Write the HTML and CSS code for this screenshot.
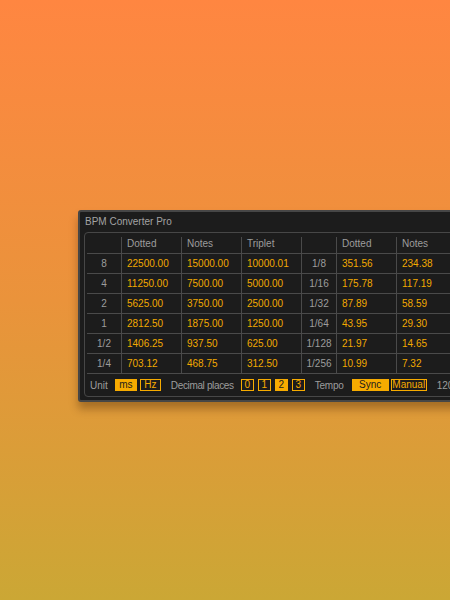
FILE: index.html
```html
<!DOCTYPE html>
<html>
<head>
<meta charset="utf-8">
<link rel="stylesheet" href="styles.css">
</head>
<body>
<div class="stage">
  <div class="window">
    <div class="title">BPM Converter Pro</div>
    <div class="panel">
      <div class="grid">
        <div class="cell head lab"></div>
        <div class="cell head">Dotted</div>
        <div class="cell head">Notes</div>
        <div class="cell head">Triplet</div>
        <div class="cell head lab2"></div>
        <div class="cell head">Dotted</div>
        <div class="cell head">Notes</div>
        <div class="cell head">Triplet</div>

        <div class="cell lab">8</div><div class="cell val">22500.00</div><div class="cell val">15000.00</div><div class="cell val">10000.01</div><div class="cell lab2">1/8</div><div class="cell val">351.56</div><div class="cell val">234.38</div><div class="cell val">156.25</div>
        <div class="cell lab">4</div><div class="cell val">11250.00</div><div class="cell val">7500.00</div><div class="cell val">5000.00</div><div class="cell lab2">1/16</div><div class="cell val">175.78</div><div class="cell val">117.19</div><div class="cell val">78.13</div>
        <div class="cell lab">2</div><div class="cell val">5625.00</div><div class="cell val">3750.00</div><div class="cell val">2500.00</div><div class="cell lab2">1/32</div><div class="cell val">87.89</div><div class="cell val">58.59</div><div class="cell val">39.06</div>
        <div class="cell lab">1</div><div class="cell val">2812.50</div><div class="cell val">1875.00</div><div class="cell val">1250.00</div><div class="cell lab2">1/64</div><div class="cell val">43.95</div><div class="cell val">29.30</div><div class="cell val">19.53</div>
        <div class="cell lab">1/2</div><div class="cell val">1406.25</div><div class="cell val">937.50</div><div class="cell val">625.00</div><div class="cell lab2">1/128</div><div class="cell val">21.97</div><div class="cell val">14.65</div><div class="cell val">9.77</div>
        <div class="cell lab">1/4</div><div class="cell val">703.12</div><div class="cell val">468.75</div><div class="cell val">312.50</div><div class="cell lab2">1/256</div><div class="cell val">10.99</div><div class="cell val">7.32</div><div class="cell val">4.88</div>
      </div>
      <div class="footer">
        <span class="flabel">Unit</span>
        <span class="btn on w-ms">ms</span>
        <span class="btn w-hz">Hz</span>
        <span class="flabel gap-l">Decimal places</span>
        <span class="btn sq first">0</span>
        <span class="btn sq">1</span>
        <span class="btn sq on">2</span>
        <span class="btn sq">3</span>
        <span class="flabel gap-t">Tempo</span>
        <span class="btn on w-sync">Sync</span>
        <span class="btn w-man">Manual</span>
        <span class="flabel gap-n">120.00</span>
      </div>
    </div>
  </div>
</div>
</body>
</html>
```

FILE: styles.css
```css
html, body {
  margin: 0;
  padding: 0;
  width: 450px;
  height: 600px;
  overflow: hidden;
}
body {
  font-family: "Liberation Sans", Arial, sans-serif;
  font-size: 10px;
  background: linear-gradient(180deg, #ff8641 0%, #ea933b 50%, #cba735 100%);
}
.stage {
  padding-top: 210px;
  padding-left: 78px;
  height: 600px;
  box-sizing: border-box;
}
.window {
  width: 440px;
  background: #1c1c1c;
  border: 2px solid #464646;
  border-radius: 3px;
  padding: 0 4px 3px 4px;
  box-shadow: 0 7px 9px rgba(60, 30, 0, 0.35);
}
.title {
  color: #a3a3a3;
  height: 20px;
  line-height: 20px;
  padding-left: 1px;
  font-size: 10px;
}
.panel {
  border: 1px solid #474747;
  border-radius: 4px;
  padding: 4px 0 0 2px;
}
.grid {
  display: grid;
  grid-template-columns: 34px 60px 60px 60px 35px 60px 60px 60px;
  grid-template-rows: 17px;
  grid-auto-rows: 20px;
}
.cell {
  box-sizing: border-box;
  border-left: 1px solid #4a4a4a;
  border-bottom: 1px solid #4a4a4a;
  line-height: 19px;
  padding-left: 5px;
  white-space: nowrap;
}
.cell.head {
  height: 17px;
  line-height: 14px;
  color: #9c9c9c;
}
.cell.lab {
  border-left: none;
  text-align: center;
  padding-left: 0;
  color: #9c9c9c;
}
.cell.lab2 {
  text-align: center;
  padding-left: 0;
  color: #9c9c9c;
}
.cell.val {
  color: #f2a900;
}
.footer {
  height: 22px;
  display: flex;
  align-items: center;
  padding-left: 3px;
  white-space: nowrap;
}
.flabel {
  color: #9c9c9c;
}
.btn {
  box-sizing: border-box;
  height: 12px;
  line-height: 10px;
  border: 1px solid #f7ab00;
  color: #f7ab00;
  text-align: center;
  margin-left: 3px;
}
.btn.on {
  background: #f7ab00;
  color: #1c1c1c;
}
.w-ms { width: 22px; margin-left: 7px; }
.w-hz { width: 21px; }
.sq { width: 13px; margin-left: 4px; }
.sq.first { margin-left: 0; }
.gap-l { margin-left: 10px; margin-right: 7px; letter-spacing: -0.35px; }
.gap-t { margin-left: 10px; margin-right: 8px; letter-spacing: -0.2px; }
.w-sync { width: 37px; margin-left: 0; }
.w-man { width: 36px; margin-left: 2px; }
.gap-n { margin-left: 10px; }
```
